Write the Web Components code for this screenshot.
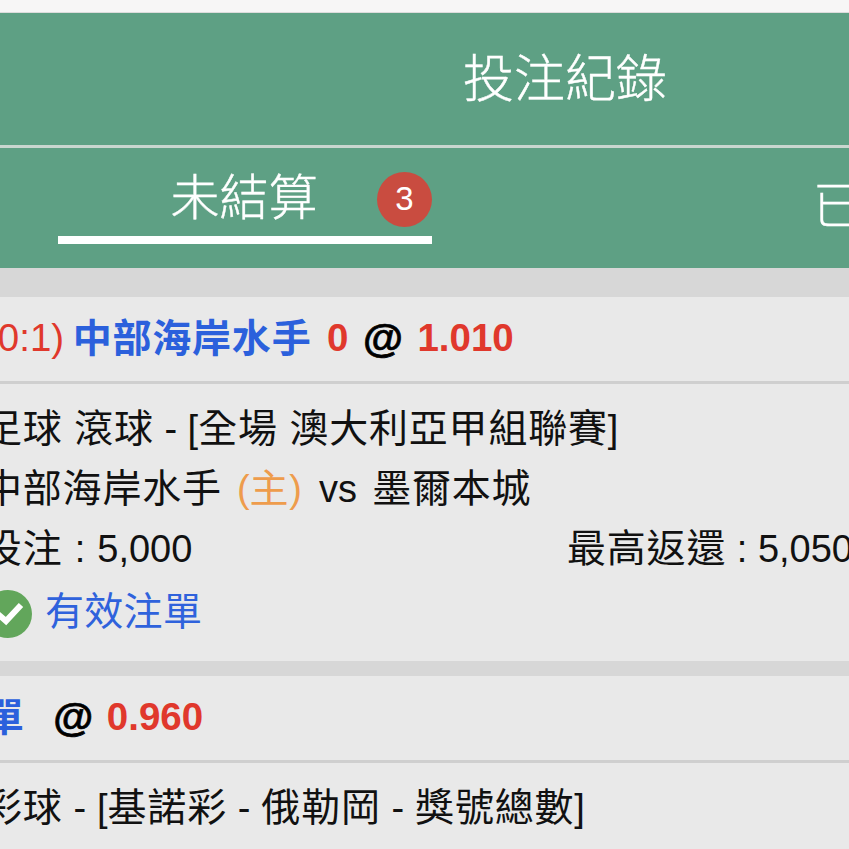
<!DOCTYPE html>
<html lang="zh-Hant"><head><meta charset="utf-8"><title>投注紀錄</title>
<style>
html,body{margin:0;padding:0;height:849px;overflow:hidden;background:#d7d7d7}
body{font-family:"Liberation Sans","Noto Sans CJK TC",sans-serif}
.c{font-size:39px;letter-spacing:.8px}
.red{color:#e0382c;font-size:38.5px}.blue{color:#2b60dc}.at{color:#000;font-size:41px;-webkit-text-stroke:.7px #000}
.n{font-weight:400}
.org{color:#ee9c4c;margin-right:2px}
.wide{word-spacing:4.5px}
.w1{word-spacing:.3px}
.w2{word-spacing:1.5px}
</style></head><body>
<x-page>
  <x-top-strip></x-top-strip>
  <x-title-bar>投注紀錄</x-title-bar>
  <x-tabs>
    <x-tab active badge="3">未結算</x-tab>
    <x-tab>已結算</x-tab>
  </x-tabs>
  <x-bet>
    <span slot="head" class="red n" style="margin:0 -6px 0 0">(0:1)</span>
    <span slot="head" class="blue c">中部海岸水手</span>
    <span slot="head" class="red" style="margin-left:1px">0</span>
    <span slot="head" class="at">@</span>
    <span slot="head" class="red">1.010</span>
    <div><span class="c">足球 滾球</span> - [<span class="c">全場 澳大利亞甲組聯賽</span>]</div>
    <div class="wide"><span class="c">中部海岸水手</span> <span class="org">(<span class="c">主</span>)</span> vs <span class="c">墨爾本城</span></div>
    <x-split><span class="w2"><span class="c">投注</span> : 5,000</span><span slot="end"><span class="c">最高返還</span> : 5,050</span></x-split>
    <x-status><span class="c" style="letter-spacing:.3px">有效注單</span></x-status>
  </x-bet>
  <x-bet>
    <span slot="head" class="blue c" style="margin-right:14px">單</span>
    <span slot="head" class="at" style="margin-right:-1px">@</span>
    <span slot="head" class="red">0.960</span>
    <div class="w1"><span class="c">彩球</span> - [<span class="c">基諾彩</span> - <span class="c">俄勒岡</span> - <span class="c">獎號總數</span>]</div>
  </x-bet>
</x-page>
<script>
function def(name, css, html){
  customElements.define(name, class extends HTMLElement{
    constructor(){super();const r=this.attachShadow({mode:'open'});r.innerHTML='<style>'+css+'</style>'+html;}
  });
}
def('x-page',':host{display:block;width:1280px;margin-left:-75px;background:#d7d7d7;color:#111}','<slot></slot>');
def('x-top-strip',':host{display:block;height:12px;background:#f7f6f6}','');
def('x-title-bar',':host{display:flex;align-items:center;justify-content:center;box-sizing:border-box;height:136px;padding-bottom:8px;background:#5ea084;border-top:1px solid #dcdcdc;border-bottom:3px solid #c9d6cf;color:#fff;font-size:51px;font-weight:300;-webkit-text-stroke:.4px #fff}','<slot></slot>');
def('x-tabs',':host{display:grid;grid-template-columns:1fr 1fr;height:120px;background:#5ea084;margin-bottom:29px}','<slot></slot>');
customElements.define('x-tab', class extends HTMLElement{
  constructor(){super();const r=this.attachShadow({mode:'open'});
    const b=this.getAttribute('badge');
    r.innerHTML=`<style>
      :host{display:flex;justify-content:center;color:#fff;font-size:49px;font-weight:300}
      .i{position:relative;box-sizing:border-box;width:374px;height:96px;display:flex;justify-content:center;align-items:center;line-height:1;padding-top:8px}
      :host([active]) .i{border-bottom:8px solid #fff;padding:0 2px 0 0}
      :host(:not([active])) .i{padding-left:3px}
      .t{position:relative;top:6px;-webkit-text-stroke:.4px #fff}
      .b{position:absolute;right:0;top:24px;width:55px;height:55px;box-sizing:border-box;padding-bottom:3px;border-radius:50%;background:#c94c40;font-size:33px;font-weight:400;display:flex;align-items:center;justify-content:center;font-family:"Liberation Sans",sans-serif}
    </style><div class="i"><span class="t"><slot></slot></span>${b?`<span class="b">${b}</span>`:''}</div>`;
  }
});
def('x-bet',`:host{display:block;background:#e9e9e9;margin-bottom:15px;font-size:38px;line-height:60px}
  .h{box-sizing:border-box;height:87px;border-bottom:3px solid #cfcfcf;padding:0 0 1px 60px;display:flex;align-items:center;gap:14.5px;line-height:1;white-space:pre;font-weight:700}
  .b{padding:15px 60px 19px 58px}
  ::slotted(div){height:60px}`,
  '<div class="h"><slot name="head"></slot></div><div class="b"><slot></slot></div>');
def('x-split',':host{display:grid;grid-template-columns:584px 1fr;height:60px;white-space:nowrap}','<div><slot></slot></div><div><slot name="end"></slot></div>');
def('x-status',`:host{display:flex;align-items:center;gap:13px;margin-top:3px;margin-left:-10px;height:60px;color:#2f62dc}
  svg{width:48px;height:48px;flex:none;margin:4px 0 0 11px}`,
  '<svg viewBox="0 0 48 48"><circle cx="24" cy="24" r="24" fill="#62a65b"/><path d="M12 22.5l10 8.5 15-16" fill="none" stroke="#fff" stroke-width="6"/></svg><span><slot></slot></span>');
</script>
</body></html>
